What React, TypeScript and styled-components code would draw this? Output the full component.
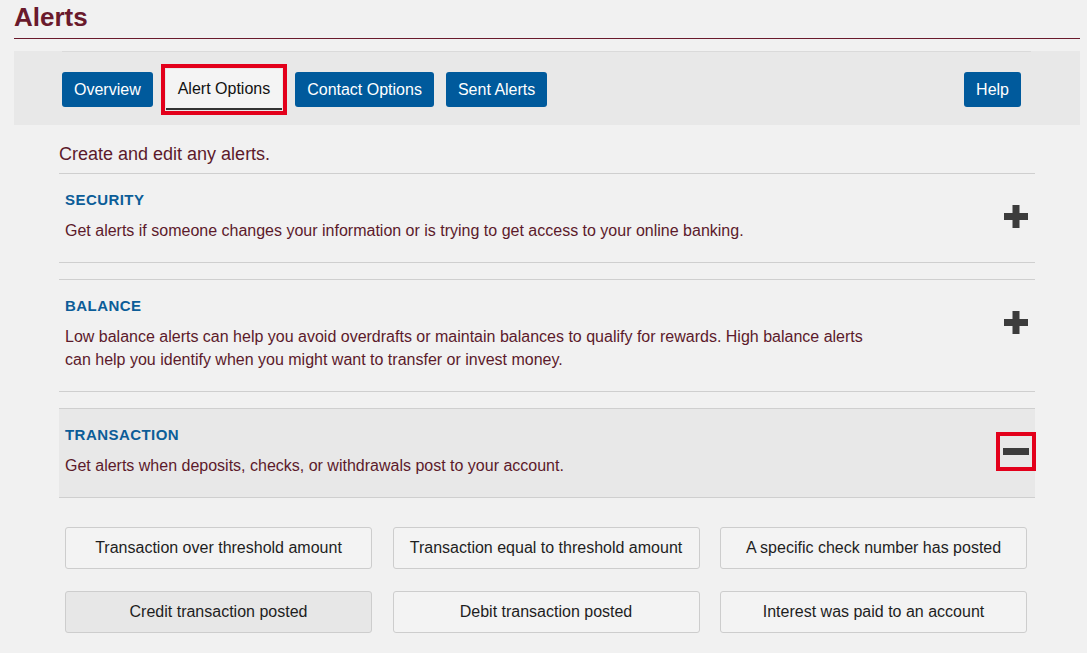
import React from "react";
import styled, { createGlobalStyle } from "styled-components";

const Global = createGlobalStyle`
  html, body { margin: 0; padding: 0; background: #f1f1f1; }
  body { font-family: "Liberation Sans", Arial, sans-serif; }
  * { box-sizing: border-box; }
`;

const Page = styled.div`
  padding: 0 7px 0 14px;
`;

const Title = styled.h1`
  margin: 0;
  font-size: 26px;
  line-height: 34px;
  font-weight: bold;
  color: #6a1a2c;
  border-bottom: 1px solid #6a1a2c;
  height: 39px;
`;

const NavPanel = styled.div`
  margin-top: 12px;
  background: #e8e8e8;
  padding: 0 49px 0 48px;
  height: 74px;
`;

const NavInner = styled.div`
  border-top: 1px solid #dadada;
  height: 100%;
  display: flex;
  align-items: center;
  gap: 12px;
  padding: 2px 10px 0 0;
`;

const NavButton = styled.button<{ $active?: boolean }>`
  font-family: "Liberation Sans", Arial, sans-serif;
  font-size: 16px;
  height: ${(p) => (p.$active ? "41px" : "35px")};
  padding: 0 12px;
  border-radius: 3px;
  cursor: pointer;
  border: none;
  background: ${(p) => (p.$active ? "#f4f4f4" : "#005a9c")};
  color: ${(p) => (p.$active ? "#111" : "#fff")};
  ${(p) =>
    p.$active
      ? `border-radius: 0; border-bottom: 2px solid #333; outline: 4px solid #e3001b; outline-offset: 1px; margin: 0 1px;`
      : ""}
`;

const Spacer = styled.div`
  flex: 1;
`;

const Content = styled.div`
  margin: 0 45px;
`;

const Intro = styled.p`
  margin: 18px 0 8px;
  font-size: 18px;
  line-height: 22px;
  color: #5c1a2b;
`;

const Section = styled.section<{ $open?: boolean }>`
  border-top: 1px solid #cfcfcf;
  border-bottom: 1px solid #cfcfcf;
  margin-bottom: 16px;
  background: ${(p) => (p.$open ? "#e8e8e8" : "transparent")};
  display: flex;
  align-items: flex-start;
  padding: 16px 3px 20px 6px;
`;

const SectionText = styled.div`
  flex: 1;
`;

const SectionTitle = styled.h2`
  margin: 0 0 9px;
  font-size: 15px;
  line-height: 20px;
  font-weight: bold;
  color: #0c5d98;
  letter-spacing: 0.45px;
`;

const SectionDesc = styled.p`
  margin: 0;
  font-size: 16px;
  line-height: 23px;
  color: #5c1a2b;
  max-width: 810px;
`;

const ToggleButton = styled.button<{ $focused?: boolean }>`
  width: 32px;
  height: 31px;
  margin-top: 11px;
  padding: 0;
  border: none;
  background: transparent;
  display: flex;
  align-items: center;
  justify-content: center;
  cursor: pointer;
  ${(p) => (p.$focused ? "outline: 4px solid #e3001b; outline-offset: 0;" : "")}
`;

const OptionsGrid = styled.div`
  margin-top: 29px;
  padding: 0 8px 0 6px;
  display: grid;
  grid-template-columns: repeat(3, 1fr);
  column-gap: 20.5px;
  row-gap: 22px;
`;

const OptionButton = styled.button<{ $hover?: boolean }>`
  height: 42px;
  border: 1px solid #cdcdcd;
  border-radius: 3px;
  background: ${(p) => (p.$hover ? "#e7e7e7" : "#f3f3f3")};
  font-family: "Liberation Sans", Arial, sans-serif;
  font-size: 16px;
  color: #1e1e1e;
  cursor: pointer;
`;

const PlusIcon = () => (
  <svg width="24" height="23" viewBox="0 0 24 23">
    <rect x="8.5" y="0" width="7" height="23" fill="#3c3c3c" />
    <rect x="0" y="8" width="24" height="7" fill="#3c3c3c" />
  </svg>
);

const MinusIcon = () => (
  <svg width="26" height="7" viewBox="0 0 26 7">
    <rect x="0" y="0" width="26" height="7" fill="#3c3c3c" />
  </svg>
);

const sections = [
  {
    title: "SECURITY",
    desc: "Get alerts if someone changes your information or is trying to get access to your online banking.",
    open: false,
  },
  {
    title: "BALANCE",
    desc: "Low balance alerts can help you avoid overdrafts or maintain balances to qualify for rewards. High balance alerts can help you identify when you might want to transfer or invest money.",
    open: false,
  },
  {
    title: "TRANSACTION",
    desc: "Get alerts when deposits, checks, or withdrawals post to your account.",
    open: true,
  },
];

const options = [
  "Transaction over threshold amount",
  "Transaction equal to threshold amount",
  "A specific check number has posted",
  "Credit transaction posted",
  "Debit transaction posted",
  "Interest was paid to an account",
];

export default function App() {
  return (
    <>
      <Global />
      <Page>
        <Title>Alerts</Title>
        <NavPanel>
          <NavInner>
            <NavButton>Overview</NavButton>
            <NavButton $active>Alert Options</NavButton>
            <NavButton>Contact Options</NavButton>
            <NavButton>Sent Alerts</NavButton>
            <Spacer />
            <NavButton>Help</NavButton>
          </NavInner>
        </NavPanel>
        <Content>
          <Intro>Create and edit any alerts.</Intro>
          {sections.map((s) => (
            <Section key={s.title} $open={s.open}>
              <SectionText>
                <SectionTitle>{s.title}</SectionTitle>
                <SectionDesc>{s.desc}</SectionDesc>
              </SectionText>
              <ToggleButton $focused={s.open} aria-label={s.open ? "Collapse" : "Expand"}>
                {s.open ? <MinusIcon /> : <PlusIcon />}
              </ToggleButton>
            </Section>
          ))}
          <OptionsGrid>
            {options.map((o, i) => (
              <OptionButton key={o} $hover={i === 3}>
                {o}
              </OptionButton>
            ))}
          </OptionsGrid>
        </Content>
      </Page>
    </>
  );
}
